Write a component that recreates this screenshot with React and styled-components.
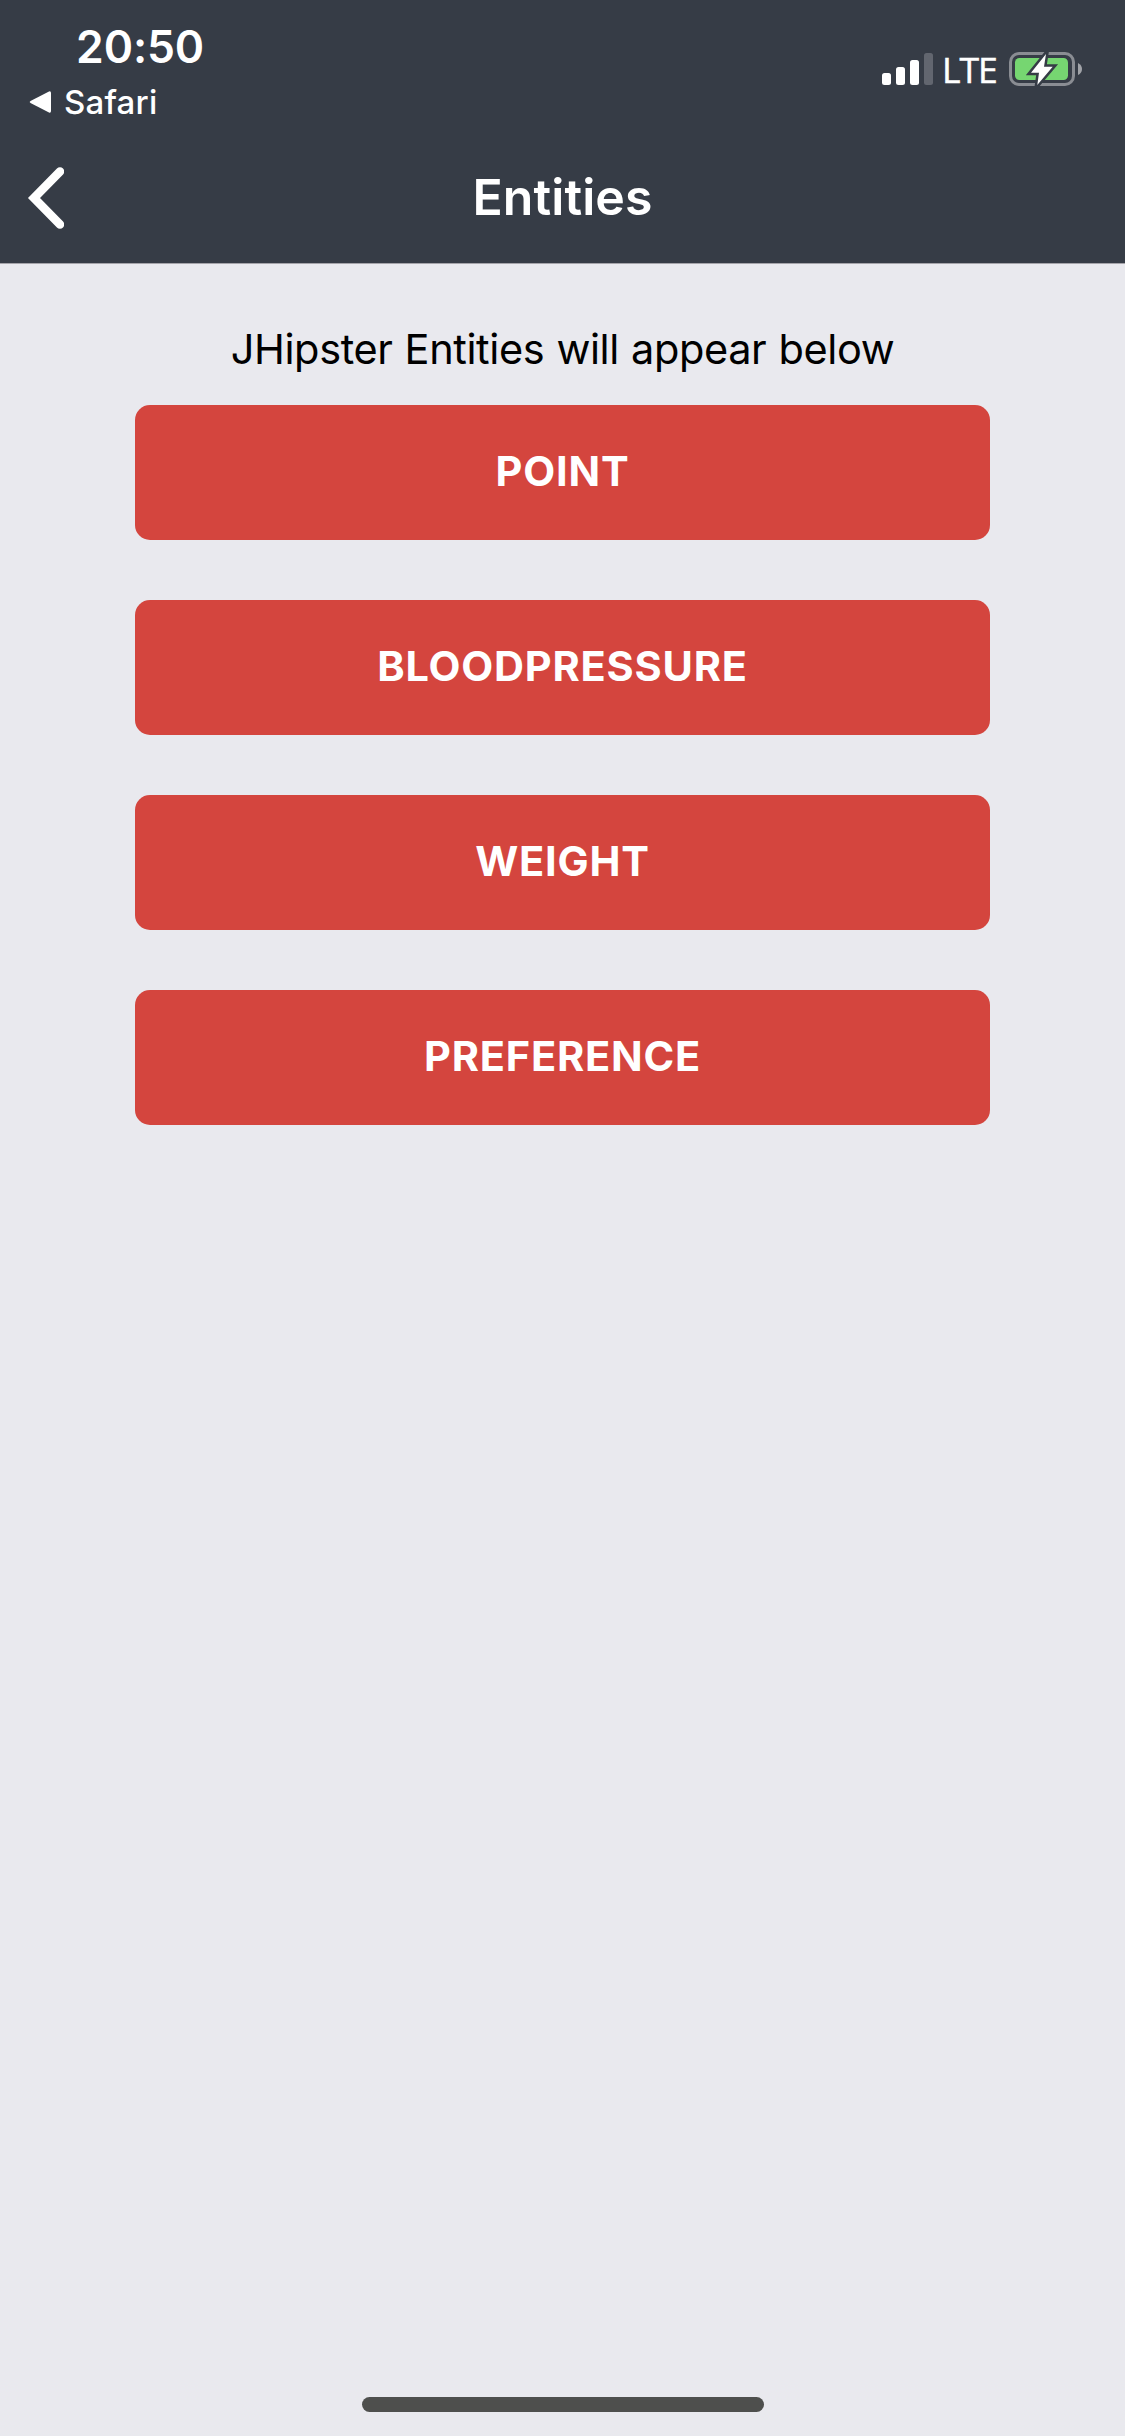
import React from "react";
import styled, { createGlobalStyle } from "styled-components";

const GlobalStyle = createGlobalStyle`
  * { box-sizing: border-box; }
  body {
    margin: 0;
    background: #e9e9ee;
    font-family: Inter, "Liberation Sans", sans-serif;
  }
`;

const Screen = styled.div`
  display: flex;
  flex-direction: column;
  width: 1125px;
  height: 2436px;
  background: #e9e9ee;
`;

const Header = styled.header`
  height: 264px;
  background: #363c46;
  border-bottom: 1px solid #a5a4aa;
`;

const StatusBar = styled.div`
  display: flex;
  justify-content: space-between;
  height: 132px;
  padding: 20px 43px 0 28px;
`;

const StatusLeft = styled.div`
  display: flex;
  flex-direction: column;
  color: #fff;
`;

const Time = styled.div`
  height: 54px;
  padding-left: 48px;
  font-size: 44.5px;
  font-weight: 600;
  line-height: 54px;
  letter-spacing: -0.1px;
`;

const ReturnLink = styled.div`
  display: flex;
  align-items: center;
  gap: 11px;
  height: 40px;
  margin-top: 8px;
  font-size: 33px;
  font-weight: 500;
  line-height: 40px;
  letter-spacing: 0.2px;
`;

const StatusRight = styled.div`
  display: flex;
  align-items: center;
  height: 98px;
`;

const Network = styled.span`
  width: 56px;
  margin: 0 11px 1px 9px;
  color: #fff;
  font-family: "Open Sans", "Noto Sans", sans-serif;
  font-size: 35.5px;
  line-height: 40px;
  letter-spacing: -1.1px;
  -webkit-text-stroke: 0.5px #fff;
`;

const NavBar = styled.nav`
  display: grid;
  grid-template-columns: 100px 1fr 100px;
  align-items: center;
  height: 131px;
`;

const BackButton = styled.button`
  display: flex;
  padding: 0 0 0 27px;
  border: 0;
  background: none;
`;

const Title = styled.h1`
  margin: 0 0 2px;
  color: #fff;
  text-align: center;
  font-size: 50px;
  font-weight: 600;
  line-height: 60px;
  letter-spacing: 0.1px;
`;

const Content = styled.main`
  display: flex;
  flex: 1;
  flex-direction: column;
  align-items: center;
  padding-top: 60px;
`;

const Caption = styled.p`
  margin: 0 0 31px;
  color: #000;
  font-size: 41.5px;
  line-height: 50px;
  letter-spacing: -0.4px;
  word-spacing: 0.9px;
  white-space: nowrap;
`;

const ButtonList = styled.div`
  display: flex;
  flex-direction: column;
  gap: 60px;
`;

const EntityButton = styled.button`
  width: 855px;
  height: 135px;
  padding: 0 0 3px;
  border: 0;
  border-radius: 15px;
  background: #d4453e;
  color: #fff;
  font-family: inherit;
  font-size: 41.5px;
  font-weight: 700;
  letter-spacing: 0.8px;
`;

const HomeArea = styled.footer`
  display: flex;
  justify-content: center;
  height: 39px;
`;

const HomeIndicator = styled.div`
  width: 402px;
  height: 15px;
  border-radius: 8px;
  background: #4e4f4d;
`;

const Triangle = () => (
  <svg width="25" height="24" viewBox="0 0 25 24" aria-hidden="true">
    <path d="M2.5 11 21 1.5Q23 .8 23 3v18q0 2.200-2 1.500L2.500 13Q.8 12 2.500 11Z" fill="#fff" />
  </svg>
);

const Signal = () => (
  <svg width="51" height="32" viewBox="0 0 51 32" aria-hidden="true">
    <g fill="#fff">
      <rect y="20" width="9" height="12" rx="2.500" />
      <rect x="14" y="14" width="9" height="18" rx="2.500" />
      <rect x="28" y="7" width="9" height="25" rx="2.500" />
      <rect x="42" width="9" height="32" rx="2.500" fill="#62666f" />
    </g>
  </svg>
);

const Battery = () => (
  <svg width="73" height="34" viewBox="0 0 73 34" aria-hidden="true">
    <rect x="1.500" y="1.500" width="63" height="31" rx="8.500" fill="none" stroke="#8a8d93" strokeWidth="3" />
    <rect x="6" y="6" width="53" height="22" rx="4.500" fill="#76d671" />
    <path d="M69 11q4 2 4 6t-4 6Z" fill="#a1a3a8" />
    <path d="M37 2 22 20.700h8L28.300 33 43.700 14.700H35Z" fill="#fff" stroke="#363c46" strokeWidth="5" paintOrder="stroke" />
  </svg>
);

const Chevron = () => (
  <svg width="37" height="64" viewBox="0 0 37 64" aria-hidden="true">
    <path d="M33 5.500 7 32l26 26.500" fill="none" stroke="#fff" strokeWidth="8.600" strokeLinecap="round" />
  </svg>
);

const entities = ["POINT", "BLOODPRESSURE", "WEIGHT", "PREFERENCE"];

export default function App() {
  return (
    <Screen>
      <GlobalStyle />
      <Header>
        <StatusBar>
          <StatusLeft>
            <Time>20:50</Time>
            <ReturnLink>
              <Triangle />
              <span>Safari</span>
            </ReturnLink>
          </StatusLeft>
          <StatusRight>
            <Signal />
            <Network>LTE</Network>
            <Battery />
          </StatusRight>
        </StatusBar>
        <NavBar>
          <BackButton aria-label="Back">
            <Chevron />
          </BackButton>
          <Title>Entities</Title>
        </NavBar>
      </Header>
      <Content>
        <Caption>JHipster Entities will appear below</Caption>
        <ButtonList>
          {entities.map((name) => (
            <EntityButton key={name}>{name}</EntityButton>
          ))}
        </ButtonList>
      </Content>
      <HomeArea>
        <HomeIndicator />
      </HomeArea>
    </Screen>
  );
}
